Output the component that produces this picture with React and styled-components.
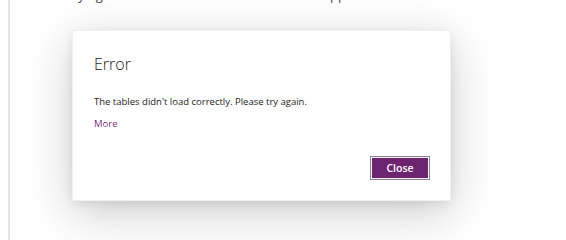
import React from "react";
import styled, { createGlobalStyle } from "styled-components";

const Global = createGlobalStyle`
  html, body { margin: 0; padding: 0; background: #fff; }
  body { width: 566px; height: 240px; overflow: hidden; font-family: "Open Sans", "Noto Sans", sans-serif; }
`;

const Page = styled.div`
  position: relative;
  width: 566px;
  height: 240px;
  overflow: hidden;
  padding-left: 8px;
  box-sizing: border-box;
`;

const Pane = styled.div`
  height: 240px;
  border-left: 2px solid #e3e3e3;
  overflow: hidden;
`;

const BackText = styled.div`
  margin-top: -13px;
  padding-left: 20px;
  font-size: 13px;
  line-height: 16px;
  color: #444;
  white-space: nowrap;
`;

const Overlay = styled.div`
  position: absolute;
  left: 72px;
  top: 30px;
`;

const Dialog = styled.div`
  width: 379px;
  height: 171px;
  box-sizing: border-box;
  background: #fff;
  border: 1px solid #f0f0f0;
  box-shadow: 0 12px 45px rgba(0, 0, 0, 0.2), 0 3px 10px rgba(0, 0, 0, 0.08);
  padding: 22px 21px 0 21px;
  display: flex;
  flex-direction: column;
`;

const Title = styled.h1`
  margin: 0;
  font-size: 16px;
  font-weight: 300;
  line-height: 22px;
  color: #222;
`;

const Message = styled.p`
  margin: 20px 0 0 0;
  font-size: 9.5px;
  line-height: 13px;
  color: #222;
`;

const MoreLink = styled.a`
  margin-top: 9px;
  font-size: 9.5px;
  line-height: 13px;
  color: #80307f;
  text-decoration: none;
  align-self: flex-start;
`;

const Footer = styled.div`
  display: flex;
  justify-content: flex-end;
  margin-top: 26px;
  margin-right: -1px;
`;

const Button = styled.button`
  width: 60px;
  height: 24px;
  box-sizing: border-box;
  background: #6c2370;
  color: #fff;
  border: 1px solid #9a7a9b;
  box-shadow: inset 0 0 0 1px #fff;
  font-family: "Open Sans", "Noto Sans", sans-serif;
  font-size: 10.5px;
  font-weight: 600;
  padding: 0;
`;

export default function App() {
  return (
    <>
      <Global />
      <Page>
        <Pane>
          <BackText>We're trying to load the tables for this notebook app.</BackText>
        </Pane>
        <Overlay>
          <Dialog role="dialog">
            <Title>Error</Title>
            <Message>The tables didn't load correctly. Please try again.</Message>
            <MoreLink href="#">More</MoreLink>
            <Footer>
              <Button>Close</Button>
            </Footer>
          </Dialog>
        </Overlay>
      </Page>
    </>
  );
}
